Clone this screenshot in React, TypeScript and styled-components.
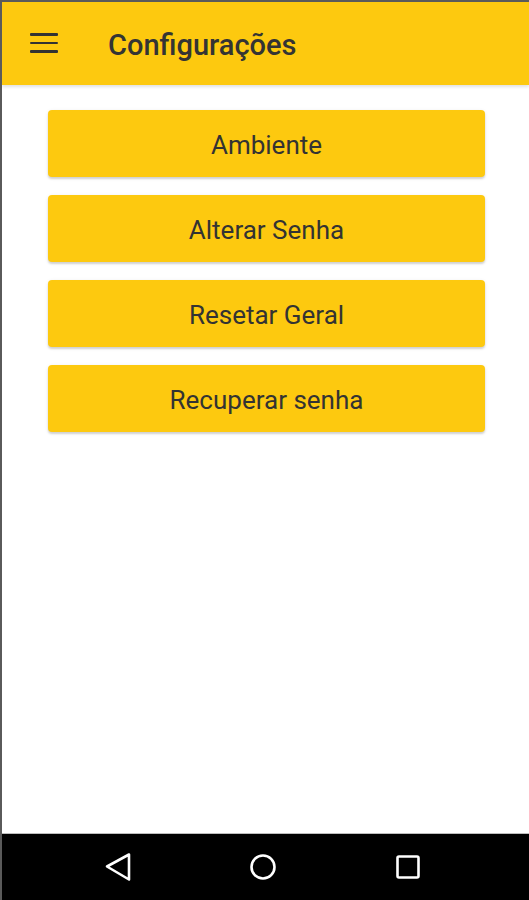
import styled, { createGlobalStyle } from 'styled-components';

const GlobalStyle = createGlobalStyle`
  html, body {
    margin: 0;
    padding: 0;
    background: #ffffff;
  }
  * {
    box-sizing: border-box;
  }
`;

const Screen = styled.div`
  width: 529px;
  height: 900px;
  display: flex;
  flex-direction: column;
  border-top: 2px solid #5a5a5a;
  border-left: 2px solid #5a5a5a;
  background: #ffffff;
  font-family: Roboto, 'Noto Sans', sans-serif;
  overflow: hidden;
`;

const AppBar = styled.header`
  height: 83px;
  flex-shrink: 0;
  display: flex;
  align-items: center;
  background: #fdc90f;
  box-shadow: 0 2px 3px rgba(0, 0, 0, 0.12);
  position: relative;
  z-index: 1;
`;

const MenuButton = styled.div`
  width: 28px;
  margin-left: 28px;
  margin-top: -1px;
  display: flex;
  flex-direction: column;
  gap: 6px;
`;

const MenuLine = styled.span`
  display: block;
  height: 2.5px;
  background: #333333;
  border-radius: 1px;
`;

const Title = styled.h1`
  margin: 2px 0 0 50px;
  font-size: 29px;
  font-weight: 500;
  color: #343434;
`;

const Content = styled.main`
  flex: 1;
  display: flex;
  flex-direction: column;
  gap: 18px;
  padding: 25px 44px 0 46px;
`;

const ActionButton = styled.button`
  height: 67px;
  border: none;
  border-radius: 4px;
  background: #fdc90f;
  color: #333333;
  font-family: Roboto, 'Noto Sans', sans-serif;
  font-size: 26px;
  font-weight: 400;
  padding: 2px 0 0;
  box-shadow: 0 2px 2px rgba(0, 0, 0, 0.14), 0 1px 4px rgba(0, 0, 0, 0.08);
  cursor: pointer;
`;

const NavBar = styled.nav`
  height: 67px;
  flex-shrink: 0;
  background: #000000;
  border-top: 1px solid #bdbdbd;
  display: flex;
  align-items: center;
  justify-content: center;
  gap: 115px;
  padding: 0 5px 0 0;
`;

const NavIcon = styled.svg`
  width: 30px;
  height: 30px;
  display: block;
`;

const items = ['Ambiente', 'Alterar Senha', 'Resetar Geral', 'Recuperar senha'];

export default function App() {
  return (
    <>
      <GlobalStyle />
      <Screen>
        <AppBar>
          <MenuButton>
            <MenuLine />
            <MenuLine />
            <MenuLine />
          </MenuButton>
          <Title>Configurações</Title>
        </AppBar>
        <Content>
          {items.map((label) => (
            <ActionButton key={label}>{label}</ActionButton>
          ))}
        </Content>
        <NavBar>
          <NavIcon viewBox="0 0 30 30">
            <path
              d="M26 2.5 L4 14.5 L26 27.5 Z"
              fill="none"
              stroke="#fff"
              strokeWidth="2.6"
              strokeLinejoin="round"
            />
          </NavIcon>
          <NavIcon viewBox="0 0 30 30">
            <circle cx="15" cy="15" r="11.5" fill="none" stroke="#fff" strokeWidth="2.6" />
          </NavIcon>
          <NavIcon viewBox="0 0 30 30">
            <rect
              x="4.5"
              y="4.5"
              width="21"
              height="21"
              rx="1.5"
              fill="none"
              stroke="#fff"
              strokeWidth="2.6"
            />
          </NavIcon>
        </NavBar>
      </Screen>
    </>
  );
}
